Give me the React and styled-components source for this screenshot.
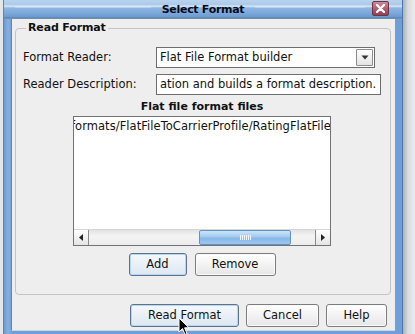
import styled, { createGlobalStyle } from "styled-components";

const GlobalStyle = createGlobalStyle`
  html, body {
    margin: 0;
    padding: 0;
    background: #ececec;
  }
  body {
    font-family: "DejaVu Sans", "Liberation Sans", sans-serif;
    color: #111;
  }
`;

const Screen = styled.div`
  width: 415px;
  height: 334px;
  overflow: hidden;
  display: flex;
  background: #e6e6e6;
`;

const Shade = styled.div`
  flex: 1;
  background: linear-gradient(to right, #aab2bc, #d9dbde 5px, #ececec 12px);
`;

const Window = styled.div`
  position: relative;
  margin-left: 3px;
  width: 400px;
  height: 346px;
  display: flex;
  flex-direction: column;
  background: #73a2d7;
  border-left: 1px solid #5b86ba;
  border-right: 1px solid #4c78ad;
  box-sizing: border-box;
`;

const TitleBar = styled.div`
  height: 19px;
  display: grid;
  grid-template-columns: 1fr auto 1fr;
  align-items: center;
  background: linear-gradient(
    to bottom,
    #b9d3ee 0,
    #acc9ea 5px,
    #e2edf8 6px,
    #8db6e2 8px,
    #78a5d9 14px,
    #6b9ad2 17px,
    #55799f 18px,
    #8ea4bb 19px
  );
`;

const TitleSide = styled.div`
  display: flex;
  align-items: center;
  gap: 7px;
  padding: ${(p) => (p.$right ? "0 13px 0 11px" : "0 11px 0 11px")};
`;

const TitleLine = styled.div`
  flex: 1;
  height: 2px;
  margin-top: -6px;
  background: linear-gradient(to bottom, #e6f0fa, #a9c7e8);
`;

const Title = styled.div`
  font-size: 11px;
  font-weight: bold;
  letter-spacing: -0.3px;
  line-height: 14px;
  color: #0a0a14;
`;

const CloseButton = styled.div`
  width: 17px;
  height: 15px;
  margin-top: -2px;
  box-sizing: border-box;
  border: 1px solid #6d3445;
  border-radius: 2px;
  background: linear-gradient(to bottom, #d08a98, #b25f72 50%, #93404f);
  display: flex;
  align-items: center;
  justify-content: center;
`;

const Body = styled.div`
  flex: 1;
  display: flex;
  padding: 0 6px 0 7px;
  background: linear-gradient(to right, #6b9bd3, #86b1e0 4px, #6f9fd6 8px);
`;

const Content = styled.div`
  width: 384px;
  height: 312px;
  box-sizing: border-box;
  border-left: 1px solid #5d86b6;
  border-bottom: 1px solid #c9d8e6;
  background: #eeeeee;
  padding-top: 3px;
  display: flex;
  flex-direction: column;
`;

const Group = styled.fieldset`
  margin: 0 4px 0 3px;
  padding: 13px 9px 18px 7px;
  border: 1px solid #c4c4c4;
  border-radius: 4px;
  min-width: 0;
`;

const GroupTitle = styled.legend`
  font-size: 11px;
  font-weight: bold;
  letter-spacing: -0.15px;
  line-height: 12px;
  padding: 0 2px;
  margin-left: 3px;
  color: #111;
`;

const FormGrid = styled.div`
  display: grid;
  grid-template-columns: 133px 1fr;
  row-gap: 6px;
  align-items: center;
`;

const Label = styled.div`
  font-size: 11.5px;
  line-height: 21px;
  white-space: nowrap;
`;

const Combo = styled.div`
  width: 219px;
  height: 21px;
  box-sizing: border-box;
  border: 1px solid #6e6e6e;
  background: #fff;
  display: flex;
  align-items: center;
  padding: 0 1px 0 3px;
`;

const FieldText = styled.div`
  flex: 1;
  font-size: 11.5px;
  line-height: 19px;
  white-space: nowrap;
  overflow: hidden;
`;

const ArrowButton = styled.div`
  width: 17px;
  height: 17px;
  box-sizing: border-box;
  border: 1px solid #8c8c8c;
  border-radius: 1px;
  background: linear-gradient(to bottom, #ffffff, #e3e3e3);
  display: flex;
  align-items: center;
  justify-content: center;
`;

const TextField = styled.div`
  width: 225px;
  height: 21px;
  box-sizing: border-box;
  border: 1px solid #6e6e6e;
  background: #fff;
  padding: 0 2px 0 3px;
  display: flex;
  overflow: hidden;
`;

const Section = styled.div`
  display: flex;
  flex-direction: column;
  align-items: center;
`;

const SectionTitle = styled.div`
  margin-top: 5px;
  font-size: 11px;
  font-weight: bold;
  line-height: 14px;
`;

const ListBox = styled.div`
  margin-top: 2px;
  width: 258px;
  height: 130px;
  box-sizing: border-box;
  border: 1px solid #727272;
  background: #fff;
  display: flex;
  flex-direction: column;
`;

const ListItems = styled.div`
  flex: 1;
  overflow: hidden;
  padding-top: 2px;
`;

const ListItem = styled.div`
  margin-left: -3px;
  font-size: 11.5px;
  letter-spacing: 0.05px;
  line-height: 14px;
  white-space: nowrap;
`;

const HScroll = styled.div`
  height: 15px;
  display: flex;
  background: linear-gradient(to bottom, #e2e2e2, #f4f4f4 40%, #ececec);
  border-top: 1px solid #d6d6d6;
`;

const ScrollArrow = styled.div`
  width: 15px;
  box-sizing: border-box;
  border: 1px solid #8a8a8a;
  border-width: ${(p) => (p.$right ? "0 0 0 1px" : "0 1px 0 0")};
  background: linear-gradient(to bottom, #ffffff, #e4e4e4);
  display: flex;
  align-items: center;
  justify-content: center;
`;

const Track = styled.div`
  flex: 1;
  display: flex;
  padding-left: ${(p) => p.$offset}px;
`;

const Thumb = styled.div`
  width: 92px;
  box-sizing: border-box;
  border: 1px solid #5f93c8;
  border-radius: 2px;
  background: linear-gradient(to bottom, #cde4f8, #a3cbf0 45%, #86b7e7 55%, #9ec6ee);
  display: flex;
  align-items: center;
  justify-content: center;
`;

const Grip = styled.div`
  width: 11px;
  height: 5px;
  background: repeating-linear-gradient(to right, #eef6fd 0 1px, transparent 1px 2px);
`;

const ButtonRow = styled.div`
  display: flex;
  justify-content: ${(p) => (p.$end ? "flex-end" : "center")};
  gap: ${(p) => (p.$end ? "7px" : "8px")};
  margin-top: ${(p) => (p.$end ? "9px" : "7px")};
  padding-right: ${(p) => (p.$end ? "8px" : "0")};
`;

const Button = styled.div`
  width: ${(p) => p.$w}px;
  height: 23px;
  box-sizing: border-box;
  border: 1px solid ${(p) => (p.$focus ? "#5a7490" : "#7c7c7c")};
  border-radius: 3px;
  background: ${(p) =>
    p.$focus
      ? "linear-gradient(to bottom, #f4f8fc, #dde8f2)"
      : "linear-gradient(to bottom, #ffffff, #e6e6e6)"};
  box-shadow: ${(p) => (p.$focus ? "inset 0 0 0 1px #bcd6ee" : "inset 0 0 0 1px #fafafa")};
  font-size: 11.5px;
  line-height: 21px;
  text-align: center;
  white-space: nowrap;
`;

const Cursor = styled.svg`
  position: absolute;
  left: 174px;
  top: 317px;
`;

export default function App() {
  return (
    <>
      <GlobalStyle />
      <Screen>
        <Window>
          <TitleBar>
            <TitleSide>
              <TitleLine />
            </TitleSide>
            <Title>Select Format</Title>
            <TitleSide $right>
              <TitleLine />
              <CloseButton>
                <svg width="9" height="9" viewBox="0 0 9 9">
                  <path d="M1 1L8 8M8 1L1 8" stroke="#fff" strokeWidth="2.2" strokeLinecap="round" />
                </svg>
              </CloseButton>
            </TitleSide>
          </TitleBar>
          <Body>
            <Content>
              <Group>
                <GroupTitle>Read Format</GroupTitle>
                <FormGrid>
                  <Label>Format Reader:</Label>
                  <Combo>
                    <FieldText>Flat File Format builder</FieldText>
                    <ArrowButton>
                      <svg width="8" height="5" viewBox="0 0 8 5">
                        <path d="M0.5 0.5H7.5L4 4.5Z" fill="#333" />
                      </svg>
                    </ArrowButton>
                  </Combo>
                  <Label>Reader Description:</Label>
                  <TextField>
                    <FieldText>ation and builds a format description.</FieldText>
                  </TextField>
                </FormGrid>
                <Section>
                  <SectionTitle>Flat file format files</SectionTitle>
                  <ListBox>
                    <ListItems>
                      <ListItem>formats/FlatFileToCarrierProfile/RatingFlatFile</ListItem>
                    </ListItems>
                    <HScroll>
                      <ScrollArrow>
                        <svg width="4" height="7" viewBox="0 0 4 7">
                          <path d="M4 0V7L0 3.5Z" fill="#222" />
                        </svg>
                      </ScrollArrow>
                      <Track $offset={110}>
                        <Thumb>
                          <Grip />
                        </Thumb>
                      </Track>
                      <ScrollArrow $right>
                        <svg width="4" height="7" viewBox="0 0 4 7">
                          <path d="M0 0V7L4 3.5Z" fill="#222" />
                        </svg>
                      </ScrollArrow>
                    </HScroll>
                  </ListBox>
                  <ButtonRow>
                    <Button $w={58} $focus>Add</Button>
                    <Button $w={81}>Remove</Button>
                  </ButtonRow>
                </Section>
              </Group>
              <ButtonRow $end>
                <Button $w={109} $focus>Read Format</Button>
                <Button $w={73}>Cancel</Button>
                <Button $w={61}>Help</Button>
              </ButtonRow>
            </Content>
          </Body>
          <Cursor width="12" height="19" viewBox="0 0 12 19">
            <path d="M1 1V15L4.5 11.5L7 17.5L9 16.6L6.6 10.8H11Z" fill="#000" stroke="#fff" strokeWidth="1" />
          </Cursor>
        </Window>
        <Shade />
      </Screen>
    </>
  );
}
